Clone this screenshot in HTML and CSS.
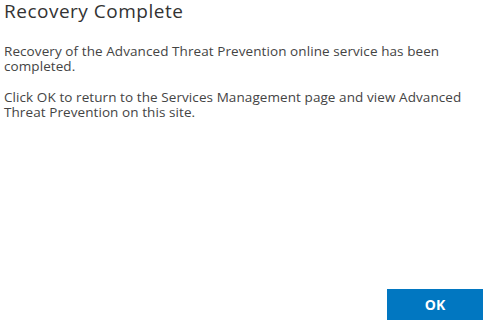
FILE: index.html
```html
<!DOCTYPE html>
<html lang="en">
<head>
  <meta charset="UTF-8">
  <title>Recovery Complete</title>
  <link rel="stylesheet" href="styles.css">
</head>
<body>
  <div class="dialog">
    <h1 class="title">Recovery Complete</h1>
    <div class="content">
      <p>Recovery of the Advanced Threat Prevention online service has been completed.</p>
      <p>Click OK to return to the Services Management page and view Advanced Threat Prevention on this site.</p>
    </div>
    <div class="actions">
      <button class="btn-ok">OK</button>
    </div>
  </div>
</body>
</html>
```

FILE: styles.css
```css
* {
  margin: 0;
  padding: 0;
  box-sizing: border-box;
}

html, body {
  height: 100%;
  background: #fff;
}

body {
  font-family: "Open Sans", "Liberation Sans", sans-serif;
  color: #444;
}

.dialog {
  display: flex;
  flex-direction: column;
  height: 100%;
  padding: 0 8px 7px 4px;
}

.title {
  font-size: 19px;
  font-weight: normal;
  line-height: 22px;
  letter-spacing: 0.5px;
  color: #333;
}

.content {
  flex: 1;
  padding-top: 22px;
  font-size: 13.5px;
  line-height: 15px;
  letter-spacing: 0.08px;
}

.content p {
  margin-bottom: 16px;
}

.actions {
  display: flex;
  justify-content: flex-end;
}

.btn-ok {
  width: 96px;
  height: 31px;
  border: none;
  background-color: #0177c1;
  color: #fff;
  font-family: "Open Sans", "Liberation Sans", sans-serif;
  font-weight: bold;
  font-size: 14px;
}
```
